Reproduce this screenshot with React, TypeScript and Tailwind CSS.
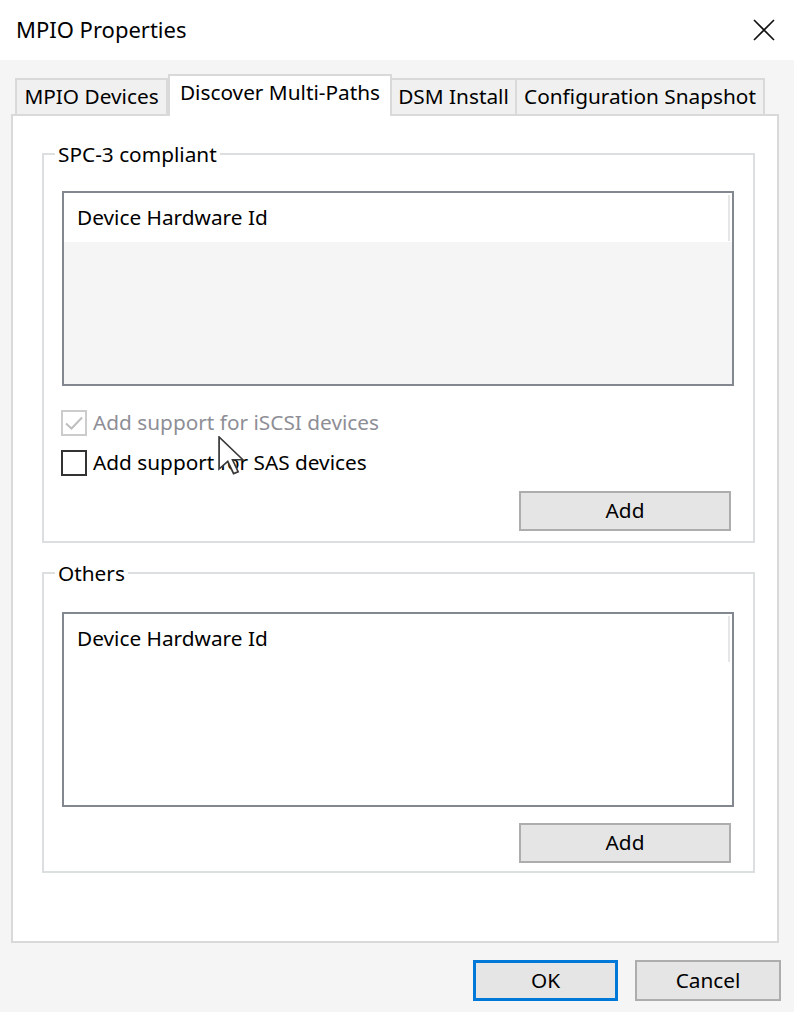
import React from 'react';

const Tab: React.FC<{ label: string; width: string; active?: boolean; className?: string }> = ({ label, width, active, className = '' }) => (
    <div
        className={`${width} ${className} flex items-center justify-center border-2 border-b-0 border-[#d9d9d9] ${active ? 'h-[42px] bg-white relative z-10 pb-[6px]' : 'h-[36px] mb-[2px] bg-[#f0f0f0]'}`}
    >
        {label}
    </div>
);

const Checkbox: React.FC<{ checked?: boolean; disabled?: boolean; label: string }> = ({ checked, disabled, label }) => (
    <div className="flex items-center h-[26px]">
        <div className={`w-[26px] h-[26px] border-2 flex items-center justify-center ${disabled ? 'border-[#cccccc]' : 'border-[#333333]'} bg-white`}>
            {checked && (
                <svg width="20" height="16" viewBox="0 0 20 16" fill="none">
                    <path d="M2 8.5 L7.5 13.5 L18 2.5" stroke="#bfbfbf" strokeWidth="2" />
                </svg>
            )}
        </div>
        <span className={`ml-[6px] ${disabled ? 'text-[#8e8e96]' : 'text-black'}`}>{label}</span>
    </div>
);

const ListBox: React.FC<{ grayBody?: boolean }> = ({ grayBody }) => (
    <div className={`h-[195px] border-2 border-[#828790] flex flex-col ${grayBody ? 'bg-[#f5f5f5]' : 'bg-white'}`}>
        <div className="h-[49px] flex bg-white">
            <div className="flex-1 flex items-center pl-[13px]">Device Hardware Id</div>
            <div className="w-[2px] h-[46px] mt-[2px] bg-[#e6e6e6]" />
            <div className="w-[2px]" />
        </div>
    </div>
);

const WinButton: React.FC<{ label: string; className?: string }> = ({ label, className = '' }) => (
    <button className={`h-[40px] flex items-center justify-center bg-[#e5e5e5] border-2 border-[#adadad] ${className}`}>
        {label}
    </button>
);

const GroupBox: React.FC<{ title: string; className?: string; children: React.ReactNode }> = ({ title, className = '', children }) => (
    <fieldset className={`border-2 border-[#dcdfdf] ml-[29px] mr-[22px] ${className}`}>
        <legend className="ml-[11px] px-[3px] leading-[24px]">{title}</legend>
        {children}
    </fieldset>
);

export default function App() {
    return (
        <div className="w-[794px] h-[1012px] bg-[#f5f5f5] flex flex-col relative text-[20.8px] text-black font-['Noto_Sans','Open_Sans',sans-serif] overflow-hidden">
            {/* title bar */}
            <div className="h-[60px] bg-white flex items-center justify-between pl-[16px] pr-[19px] shrink-0">
                <span className="text-[22px] pb-[2px]">MPIO Properties</span>
                <svg width="22" height="22" viewBox="0 0 22 22">
                    <path d="M1 1 L21 21 M21 1 L1 21" stroke="#111" strokeWidth="1.6" />
                </svg>
            </div>

            <div className="pl-[11px] pr-[15px] pt-[14px]">
                {/* tabs */}
                <div className="flex items-end h-[42px] -mb-[2px] pl-[4px] relative z-10">
                    <Tab label="MPIO Devices" width="w-[153px]" />
                    <Tab label="Discover Multi-Paths" width="w-[224px]" active />
                    <Tab label="DSM Install" width="w-[127px]" className="-ml-[2px]" />
                    <Tab label="Configuration Snapshot" width="w-[250px]" className="-ml-[2px]" />
                </div>

                {/* tab page */}
                <div className="h-[829px] bg-white border-2 border-[#d9d9d9] pt-[26px]">
                    <GroupBox title="SPC-3 compliant">
                        <div className="mt-[25px] ml-[18px] mr-[19px]">
                            <ListBox grayBody />
                        </div>
                        <div className="ml-[17px] mt-[24px] flex flex-col gap-[14px]">
                            <Checkbox checked disabled label="Add support for iSCSI devices" />
                            <Checkbox label="Add support for SAS devices" />
                        </div>
                        <div className="flex justify-end mr-[22px] mt-[15px] mb-[10px]">
                            <WinButton label="Add" className="w-[212px]" />
                        </div>
                    </GroupBox>

                    <GroupBox title="Others" className="mt-[18px]">
                        <div className="mt-[27px] ml-[18px] mr-[19px]">
                            <ListBox />
                        </div>
                        <div className="flex justify-end mr-[22px] mt-[16px] mb-[8px]">
                            <WinButton label="Add" className="w-[212px]" />
                        </div>
                    </GroupBox>
                </div>
            </div>

            {/* dialog buttons */}
            <div className="flex justify-end gap-[17px] pr-[13px] pt-[17px]">
                <button className="w-[145px] h-[41px] flex items-center justify-center bg-[#e5e5e5] border-[3px] border-[#0078d7]">OK</button>
                <WinButton label="Cancel" className="w-[146px] h-[41px]" />
            </div>

            {/* mouse pointer */}
            <svg className="absolute left-[218px] top-[436px]" width="26" height="40" viewBox="0 0 12 20" preserveAspectRatio="none">
                <path d="M0.5 0.5 L0.5 16.5 L4.5 12.7 L7.2 18.8 L9.3 17.9 L6.7 11.9 L11.5 11.9 Z" fill="#ffffff" stroke="#3a3a3a" strokeWidth="0.8" strokeLinejoin="miter" />
            </svg>
        </div>
    );
}
